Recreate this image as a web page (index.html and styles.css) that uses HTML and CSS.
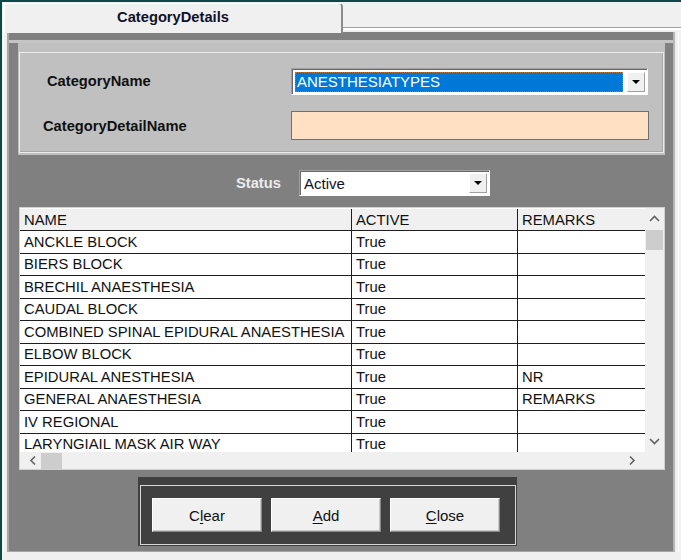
FILE: index.html
```html
<!DOCTYPE html>
<html>
<head>
<meta charset="utf-8">
<link rel="stylesheet" href="styles.css">
</head>
<body>
<div class="tabs">
  <div class="tab">CategoryDetails</div>
  <div class="tabrest"></div>
</div>
<div class="pagewrap">
  <div class="page">
    <div class="topwrap">
      <div class="toppanel">
        <div class="group">
          <div class="label l1">CategoryName</div>
          <div class="combo combo-cat">
            <div class="sel">ANESTHESIATYPES</div>
            <div class="ddbtn"><span class="tri"></span></div>
          </div>
          <div class="label l2">CategoryDetailName</div>
          <div class="textbox"></div>
        </div>
      </div>
    </div>

    <div class="status-row">
      <div class="status-label">Status</div>
      <div class="combo combo-status">
        <div class="val">Active</div>
        <div class="ddbtn"><span class="tri"></span></div>
      </div>
    </div>

    <div class="grid">
      <div class="table">
        <div class="row head"><div class="cell">NAME</div><div class="cell">ACTIVE</div><div class="cell">REMARKS</div></div>
        <div class="row"><div class="cell">ANCKLE BLOCK</div><div class="cell">True</div><div class="cell"></div></div>
        <div class="row"><div class="cell">BIERS BLOCK</div><div class="cell">True</div><div class="cell"></div></div>
        <div class="row"><div class="cell">BRECHIL ANAESTHESIA</div><div class="cell">True</div><div class="cell"></div></div>
        <div class="row"><div class="cell">CAUDAL BLOCK</div><div class="cell">True</div><div class="cell"></div></div>
        <div class="row"><div class="cell">COMBINED SPINAL EPIDURAL ANAESTHESIA</div><div class="cell">True</div><div class="cell"></div></div>
        <div class="row"><div class="cell">ELBOW BLOCK</div><div class="cell">True</div><div class="cell"></div></div>
        <div class="row"><div class="cell">EPIDURAL ANESTHESIA</div><div class="cell">True</div><div class="cell">NR</div></div>
        <div class="row"><div class="cell">GENERAL ANAESTHESIA</div><div class="cell">True</div><div class="cell">REMARKS</div></div>
        <div class="row"><div class="cell">IV REGIONAL</div><div class="cell">True</div><div class="cell"></div></div>
        <div class="row"><div class="cell">LARYNGIAIL MASK AIR WAY</div><div class="cell">True</div><div class="cell"></div></div>
      </div>
      <div class="vscroll">
        <svg class="arrow-up" width="19" height="20" viewBox="0 0 19 20"><polyline points="5,13 9.5,8.5 14,13" fill="none" stroke="#606060" stroke-width="1.6"/></svg>
        <div class="vthumb"></div>
        <div class="vspace"></div>
        <svg class="arrow-down" width="19" height="20" viewBox="0 0 19 20"><polyline points="5,7 9.5,11.5 14,7" fill="none" stroke="#606060" stroke-width="1.6"/></svg>
      </div>
      <div class="hscroll">
        <svg class="arrow-left" width="20" height="17" viewBox="0 0 20 17"><polyline points="12,4.5 8,8.5 12,12.5" fill="none" stroke="#606060" stroke-width="1.6"/></svg>
        <div class="hthumb"></div>
        <div class="hspace"></div>
        <svg class="arrow-right" width="20" height="17" viewBox="0 0 20 17"><polyline points="8,4.5 12,8.5 8,12.5" fill="none" stroke="#606060" stroke-width="1.6"/></svg>
      </div>
      <div class="corner"></div>
    </div>

    <div class="btnpanel">
      <div class="btninner">
        <button class="btn">C<u>l</u>ear</button>
        <button class="btn"><u>A</u>dd</button>
        <button class="btn"><u>C</u>lose</button>
      </div>
    </div>
  </div>
</div>
</body>
</html>
```

FILE: styles.css
```css
* { box-sizing: border-box; }

html, body {
  margin: 0;
  padding: 0;
}

body {
  width: 681px;
  height: 560px;
  overflow: hidden;
  background: #f0f0f0;
  border-top: 2px solid #0c4848;
  border-left: 2px solid #0c4848;
  font-family: "Liberation Sans", Arial, sans-serif;
  color: #000;
}

/* ---------- tab strip ---------- */
.tabs {
  display: flex;
  height: 30px;
}

.tab {
  width: 340px;
  height: 30px;
  margin-left: 1px;
  margin-top: 1px;
  background: #f0f0f0;
  border-top: 1px solid #ffffff;
  border-left: 2px solid #ffffff;
  border-right: 2px solid #8c8c8c;
  border-top-right-radius: 4px;
  font-weight: bold;
  font-size: 14.7px;
  color: #101028;
  display: flex;
  justify-content: center;
  padding-top: 5px;
  position: relative;
  z-index: 1;
}

.tabrest {
  flex: 1;
  height: 26px;
  border-bottom: 1px solid #a0a0a0;
  box-shadow: 0 2px 0 #ffffff;
}

/* ---------- page ---------- */
.pagewrap {
  margin-left: 1px;
  width: 676px;
  border-left: 1px solid #ffffff;
  border-right: 1px solid #ffffff;
  padding-left: 3px;
}

.page {
  width: 668px;
  height: 520px;
  background: #808080;
  border-left: 2px solid #a6a6a6;
  border-right: 2px solid #b4b4b4;
  border-bottom: 1px solid #a6a6a6;
  display: flex;
  flex-direction: column;
}

.topwrap {
  margin-top: 8px;
  border-top: 3px solid #c4c4c4;
}

.toppanel {
  margin-left: 9px;
  margin-right: 8px;
  height: 112px;
  background: #c0c0c0;
  padding: 9px 1px 2px 1px;
}

.group {
  height: 101px;
  border: 1px solid #ececec;
  box-shadow: inset -1px -1px 0 #a8a8a8;
  display: grid;
  grid-template-columns: 271px 1fr;
  grid-template-rows: 27px 29px;
  row-gap: 15px;
  padding-top: 15px;
  align-items: center;
}

.label {
  font-weight: bold;
  font-size: 14.7px;
  color: #101010;
}

.l1 { padding-left: 27px; margin-top: -2px; }
.l2 { padding-left: 23px; margin-top: 2px; }

.combo {
  display: flex;
  background: #ffffff;
  border: 1px solid;
  border-color: #a0a0a0 #ffffff #ffffff #a0a0a0;
  box-shadow: inset 1px 1px 0 #696969;
}

.combo-cat {
  width: 357px;
  height: 27px;
  padding: 3px 2px 2px 3px;
  gap: 4px;
}

.sel {
  flex: 1;
  background: #0078d7;
  color: #ffffff;
  font-size: 15px;
  outline: 1px dotted #b07840;
  outline-offset: -1px;
  padding-left: 2px;
  line-height: 20px;
}

.ddbtn {
  width: 18px;
  background: #f0f0f0;
  border: 1px solid;
  border-color: #ffffff #a0a0a0 #a0a0a0 #ffffff;
  display: flex;
  align-items: center;
  justify-content: center;
}

.tri {
  width: 0;
  height: 0;
  border-left: 4px solid transparent;
  border-right: 4px solid transparent;
  border-top: 4px solid #000000;
}

.textbox {
  width: 358px;
  height: 29px;
  background: #ffe0c2;
  border: 1px solid #707070;
  margin-top: 1px;
}

/* ---------- status ---------- */
.status-row {
  margin-top: 15px;
  height: 26px;
  display: flex;
  align-items: center;
  padding-left: 227px;
}

.status-label {
  width: 63px;
  font-weight: bold;
  font-size: 14.7px;
  color: #ececec;
}

.combo-status {
  width: 191px;
  height: 26px;
  padding: 2px 2px 2px 4px;
}

.val {
  flex: 1;
  font-size: 15px;
  line-height: 22px;
  color: #10102a;
}

/* ---------- grid ---------- */
.grid {
  margin-top: 11px;
  margin-left: 10px;
  width: 646px;
  height: 263px;
  border: 1px solid #d0d0d0;
  display: grid;
  grid-template-columns: 625px 19px;
  grid-template-rows: 244px 17px;
  background: #f0f0f0;
}

.table {
  background: #ffffff;
  overflow: hidden;
}

.row {
  display: grid;
  grid-template-columns: 332px 166px 127px;
  height: 22.5px;
  border-bottom: 1px solid #1e1e1e;
  font-size: 14.8px;
  color: #111;
}

.row.head {
  height: 23px;
  background: #f0f0f0;
  border-top: 1px solid #ffffff;
}

.cell {
  padding-left: 4px;
  display: flex;
  align-items: center;
  white-space: nowrap;
  overflow: hidden;
}

.cell:nth-child(1),
.cell:nth-child(2) {
  border-right: 1px solid #1e1e1e;
}

.vscroll {
  background: #f0f0f0;
  display: flex;
  flex-direction: column;
}

.vthumb {
  height: 20px;
  margin: 2px 1px 0 1px;
  background: #cdcdcd;
}

.vspace { flex: 1; }

.hscroll {
  background: #f0f0f0;
  display: flex;
  align-items: center;
  padding-left: 3px;
}

.hthumb {
  width: 21px;
  height: 16px;
  margin-left: -2px;
  background: #cdcdcd;
}

.hspace { flex: 1; }

.arrow-right { margin-right: 3px; }

.corner { background: #f0f0f0; }

/* ---------- buttons ---------- */
.btnpanel {
  margin-top: 7px;
  margin-left: 129px;
  width: 379px;
  height: 69px;
  background: #404040;
  padding: 8px 1px 1px 2px;
}

.btninner {
  height: 60px;
  border: 1px solid #d8d8d8;
  display: flex;
  gap: 9px;
  padding: 12px 0 0 11px;
}

.btn {
  width: 110px;
  height: 34px;
  background: #f0f0f0;
  border: 1px solid;
  border-color: #ffffff #8a8a8a #8a8a8a #ffffff;
  box-shadow: inset -1px -1px 0 #c8c8c8;
  font-family: "Liberation Sans", Arial, sans-serif;
  font-size: 15px;
  color: #111;
  padding: 0;
  margin: 0;
}

.btn u {
  text-underline-offset: 2px;
}
```
